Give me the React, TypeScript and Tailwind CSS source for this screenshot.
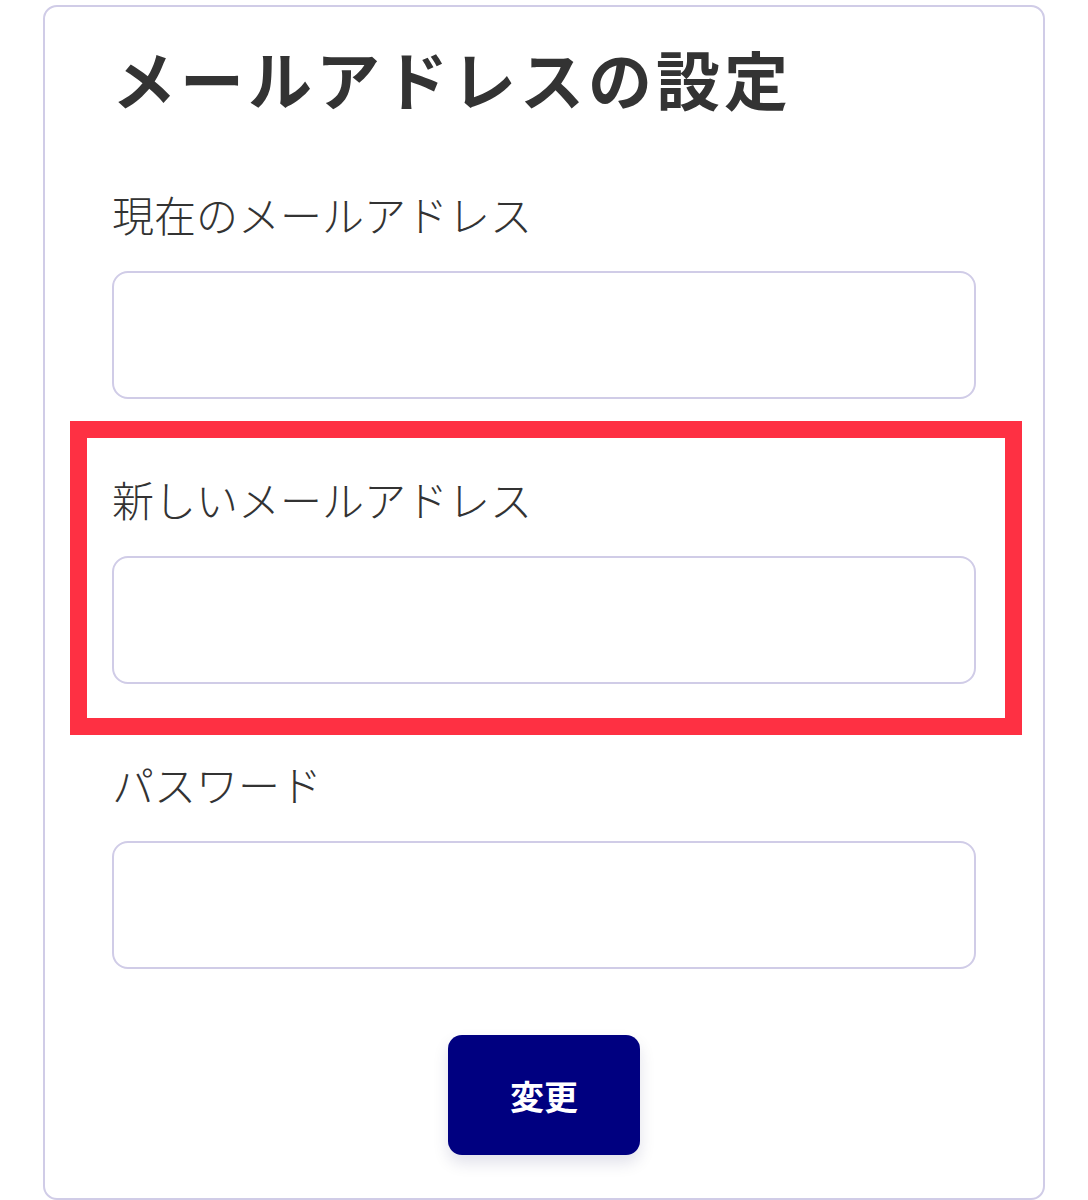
import React from "react";

const font = { fontFamily: '"Noto Sans CJK JP", "Noto Sans", sans-serif' };

const Field = ({ label, type = "text" }: { label: string; type?: string }) => (
  <div className="flex flex-col">
    <label className="text-[42px] leading-[60px] font-light text-[#333333]">{label}</label>
    <input
      type={type}
      className="mt-[27px] h-[128px] w-full rounded-[16px] border-2 border-[#d0cce7] bg-white outline-none"
    />
  </div>
);

const App = () => {
  return (
    <div className="w-[1088px] h-[1200px] bg-white overflow-hidden" style={font}>
      <div className="relative ml-[43px] mt-[5px] w-[1002px] h-[1195px] rounded-[14px] border-2 border-[#d0cce7] px-[67px]">
        <h1 className="mt-[22px] text-[64px] leading-[96px] font-bold text-[#333333] tracking-[4px]">
          メールアドレスの設定
        </h1>
        <div className="mt-[59px] flex flex-col gap-[70px]">
          <Field label="現在のメールアドレス" />
          <Field label="新しいメールアドレス" />
          <Field label="パスワード" type="password" />
        </div>
        <div className="mt-[66px] flex justify-center">
          <button className="h-[120px] w-[192px] rounded-[14px] bg-[#000080] text-[34px] font-bold text-white shadow-[0_8px_16px_rgba(0,0,80,0.12)]">
            変更
          </button>
        </div>
        {/* annotation box */}
        <div className="absolute left-[25px] top-[414px] h-[314px] w-[952px] border-[17px] border-[#fe3043]" />
      </div>
    </div>
  );
};

export default App;
